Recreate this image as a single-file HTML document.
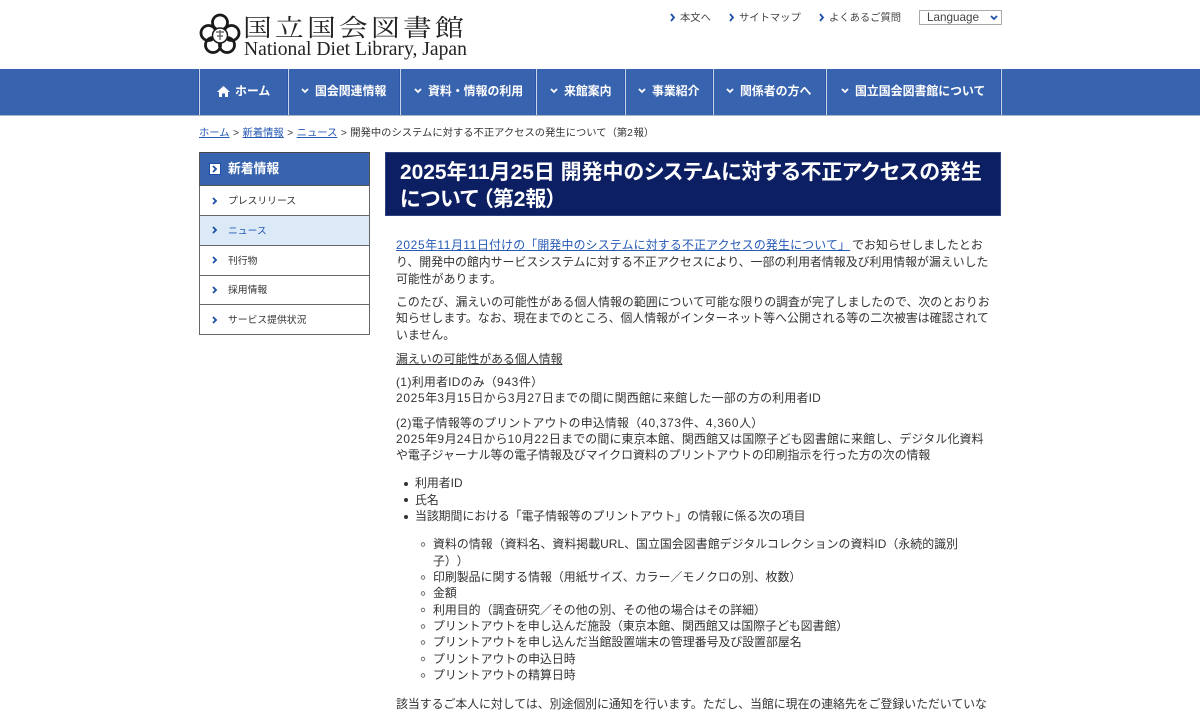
<!DOCTYPE html>
<html lang="ja"><head><meta charset="utf-8"><title>国立国会図書館</title>
<style>
html,body{margin:0;padding:0;background:#fff}
body{width:1200px;height:712px;overflow:hidden;position:relative;font-family:"Liberation Sans","Noto Sans CJK JP",sans-serif;color:#333;text-spacing-trim:space-all}
.a{position:absolute;white-space:nowrap}
.l{position:absolute;left:396px;white-space:nowrap;font-size:11.9px;line-height:16px;height:16px;color:#333}
i{font-style:normal;letter-spacing:.7px}
a{color:#2559b4;text-decoration:underline}
.nav{position:absolute;left:0;top:69px;width:1200px;height:46px;background:#3863ae;border-bottom:1px solid #a9b4c6}
.sep{position:absolute;top:69px;width:2px;height:46px;box-sizing:border-box;border-left:1px solid #2a55a8;border-right:1px solid #c9d4e8}
.ni{position:absolute;top:69px;height:46px;line-height:45px;font-size:11.9px;font-weight:bold;color:#fff;white-space:nowrap}
.side{position:absolute;left:199px;width:171px;box-sizing:border-box;border:1px solid #666;border-top:0;height:30px;line-height:29px;font-size:9.8px;color:#333;background:#fff}
.side span{position:absolute;left:28px;top:1px}
svg{position:absolute;overflow:visible}
.t{font-size:10.3px;line-height:14px;color:#444;top:12px}
</style></head><body>

<svg style="left:199px;top:14px" width="44" height="44" viewBox="0 0 44 44" fill="none" stroke="#1a1a1a" stroke-width="2.800"><circle cx="21" cy="8.500" r="7.500"/><circle cx="32.500" cy="19" r="7.500"/><circle cx="28" cy="31" r="7.500"/><circle cx="14" cy="31" r="7.500"/><circle cx="9.500" cy="19" r="7.500"/><circle cx="21" cy="21.500" r="7.500" fill="#fff" stroke-width="1.500"/><path d="M17 18h8M21 16v10M18 22h6" stroke="#555" stroke-width="1.200"/></svg>
<div class="a" style="left:243px;top:11px;font-family:'Noto Serif CJK SC','Liberation Serif',serif;font-size:24px;line-height:30px;letter-spacing:2.670px;color:#222;transform:scaleX(1.200);transform-origin:0 50%">国立国会図書館</div>
<div class="a" style="left:244px;top:40px;font-family:'Liberation Serif',serif;font-size:19.600px;line-height:20px;color:#222">National Diet Library, Japan</div>

<svg style="left:670px;top:13px" width="6" height="9" fill="none" stroke="#1c4fa8" stroke-width="1.800"><path d="M1 1l3 3.500l-3 3.500"/></svg>
<div class="a t" style="left:680px">本文へ</div>
<svg style="left:729px;top:13px" width="6" height="9" fill="none" stroke="#1c4fa8" stroke-width="1.800"><path d="M1 1l3 3.500l-3 3.500"/></svg>
<div class="a t" style="left:739px">サイトマップ</div>
<svg style="left:819px;top:13px" width="6" height="9" fill="none" stroke="#1c4fa8" stroke-width="1.800"><path d="M1 1l3 3.500l-3 3.500"/></svg>
<div class="a t" style="left:829px">よくあるご質問</div>
<div class="a" style="left:919px;top:10px;width:83px;height:15px;box-sizing:border-box;border:1px solid #aaa;background:#fff;font-size:11.700px;line-height:13px;padding-left:7px;color:#444">Language</div>
<svg style="left:990px;top:15px" width="9" height="6" fill="none" stroke="#1c4fa8" stroke-width="1.800"><path d="M1 1l3 3l3-3"/></svg>

<div class="nav"></div>
<div class="sep" style="left:198px"></div><div class="sep" style="left:287px"></div><div class="sep" style="left:399px"></div><div class="sep" style="left:535px"></div><div class="sep" style="left:624px"></div><div class="sep" style="left:712px"></div><div class="sep" style="left:825px"></div><div class="sep" style="left:1000px"></div>

<svg style="left:217px;top:86px" width="13" height="11" fill="#fff"><path d="M6.500 0L0 6h2v5h3V7.500h3V11h3V6h2z"/></svg>
<div class="ni" style="left:235px">ホーム</div>
<svg style="left:301px;top:88px" width="8" height="6" fill="none" stroke="#fff" stroke-width="1.800"><path d="M1 1l3 3l3-3"/></svg>
<div class="ni" style="left:315px">国会関連情報</div>
<svg style="left:414px;top:88px" width="8" height="6" fill="none" stroke="#fff" stroke-width="1.800"><path d="M1 1l3 3l3-3"/></svg>
<div class="ni" style="left:428px">資料・情報の利用</div>
<svg style="left:550px;top:88px" width="8" height="6" fill="none" stroke="#fff" stroke-width="1.800"><path d="M1 1l3 3l3-3"/></svg>
<div class="ni" style="left:564px">来館案内</div>
<svg style="left:638px;top:88px" width="8" height="6" fill="none" stroke="#fff" stroke-width="1.800"><path d="M1 1l3 3l3-3"/></svg>
<div class="ni" style="left:652px">事業紹介</div>
<svg style="left:726px;top:88px" width="8" height="6" fill="none" stroke="#fff" stroke-width="1.800"><path d="M1 1l3 3l3-3"/></svg>
<div class="ni" style="left:740px">関係者の方へ</div>
<svg style="left:841px;top:88px" width="8" height="6" fill="none" stroke="#fff" stroke-width="1.800"><path d="M1 1l3 3l3-3"/></svg>
<div class="ni" style="left:855px">国立国会図書館について</div>

<div class="a" style="left:199px;top:126px;font-size:10.300px;line-height:16px;color:#333;word-spacing:.6px"><a href="#">ホーム</a> &gt; <a href="#">新着情報</a> &gt; <a href="#">ニュース</a> &gt; 開発中のシステムに対する不正アクセスの発生について（第<i>2</i>報）</div>

<div class="a" style="left:199px;top:152px;width:171px;height:34px;box-sizing:border-box;border:1px solid #555;border-top-color:#444;background:#3863ae"></div>
<div class="a" style="left:209px;top:163px;width:12px;height:12px;background:#fff;border:1px solid #1c4fa8;box-sizing:border-box"></div>
<svg style="left:212px;top:165px" width="6" height="8" fill="none" stroke="#1c4fa8" stroke-width="1.800"><path d="M1 1l3 3l-3 3"/></svg>
<div class="a" style="left:228px;top:160px;font-size:12.800px;font-weight:bold;line-height:18px;color:#fff">新着情報</div>

<div class="side" style="top:186px"><span>プレスリリース</span></div>
<div class="side" style="top:216px;background:#dceaf7;color:#2559b4"><span>ニュース</span></div>
<div class="side" style="top:246px"><span>刊行物</span></div>
<div class="side" style="top:276px;height:29px;line-height:27px"><span>採用情報</span></div>
<div class="side" style="top:305px"><span>サービス提供状況</span></div>
<svg style="left:212px;top:197px" width="6" height="8" fill="none" stroke="#1c4fa8" stroke-width="1.800"><path d="M1 1l3 3l-3 3"/></svg>
<svg style="left:212px;top:226px" width="6" height="8" fill="none" stroke="#1c4fa8" stroke-width="1.800"><path d="M1 1l3 3l-3 3"/></svg>
<svg style="left:212px;top:256px" width="6" height="8" fill="none" stroke="#1c4fa8" stroke-width="1.800"><path d="M1 1l3 3l-3 3"/></svg>
<svg style="left:212px;top:286px" width="6" height="8" fill="none" stroke="#1c4fa8" stroke-width="1.800"><path d="M1 1l3 3l-3 3"/></svg>
<svg style="left:212px;top:316px" width="6" height="8" fill="none" stroke="#1c4fa8" stroke-width="1.800"><path d="M1 1l3 3l-3 3"/></svg>

<div class="a" style="left:385px;top:152px;width:616px;height:64px;background:#0d1f63;border:1px solid #33427f;box-sizing:border-box"></div>
<div class="a" style="left:400px;top:159px;font-size:20.950px;font-weight:bold;line-height:27px;color:#fff;font-feature-settings:'palt'">2025年11月25日 開発中のシステムに対する不正アクセスの発生<br>について<span style="margin-left:4px">（第2報）</span></div>

<div class="l" style="top:237px"><a href="#" style="letter-spacing:.19px;margin-right:2px"><i>2025</i>年<i>11</i>月<i>11</i>日付けの「開発中のシステムに対する不正アクセスの発生について」</a>でお知らせしましたとお</div>
<div class="l" style="top:254px">り、開発中の館内サービスシステムに対する不正アクセスにより、一部の利用者情報及び利用情報が漏えいした</div>
<div class="l" style="top:271px">可能性があります。</div>
<div class="l" style="top:294px">このたび、漏えいの可能性がある個人情報の範囲について可能な限りの調査が完了しましたので、次のとおりお</div>
<div class="l" style="top:310px">知らせします。なお、現在までのところ、個人情報がインターネット等へ公開される等の二次被害は確認されて</div>
<div class="l" style="top:327px">いません。</div>
<div class="l" style="top:351px;text-decoration:underline">漏えいの可能性がある個人情報</div>
<div class="l" style="top:374px;letter-spacing:.25px">(<i>1</i>)利用者IDのみ（<i>943</i>件）</div>
<div class="l" style="top:390px;letter-spacing:.23px"><i>2025</i>年<i>3</i>月<i>15</i>日から<i>3</i>月<i>27</i>日までの間に関西館に来館した一部の方の利用者ID</div>
<div class="l" style="top:415px;letter-spacing:.19px">(<i>2</i>)電子情報等のプリントアウトの申込情報（<i>40,373</i>件、<i>4,360</i>人）</div>
<div class="l" style="top:431px;letter-spacing:.19px"><i>2025</i>年<i>9</i>月<i>24</i>日から<i>10</i>月<i>22</i>日までの間に東京本館、関西館又は国際子ども図書館に来館し、デジタル化資料</div>
<div class="l" style="top:447px">や電子ジャーナル等の電子情報及びマイクロ資料のプリントアウトの印刷指示を行った方の次の情報</div>

<div class="a" style="left:404px;top:482px;width:4px;height:4px;border-radius:50%;background:#333"></div>
<div class="a" style="left:404px;top:498px;width:4px;height:4px;border-radius:50%;background:#333"></div>
<div class="a" style="left:404px;top:515px;width:4px;height:4px;border-radius:50%;background:#333"></div>
<div class="l" style="left:415px;top:475px">利用者ID</div>
<div class="l" style="left:415px;top:492px">氏名</div>
<div class="l" style="left:415px;top:508px;letter-spacing:-.06px">当該期間における「電子情報等のプリントアウト」の情報に係る次の項目</div>

<div class="l" style="left:433px;top:536px;letter-spacing:.05px">資料の情報（資料名、資料掲載URL、国立国会図書館デジタルコレクションの資料ID（永続的識別</div>
<div class="l" style="left:433px;top:553px">子））</div>
<div class="l" style="left:433px;top:569px">印刷製品に関する情報（用紙サイズ、カラー／モノクロの別、枚数）</div>
<div class="l" style="left:433px;top:585px">金額</div>
<div class="l" style="left:433px;top:602px">利用目的（調査研究／その他の別、その他の場合はその詳細）</div>
<div class="l" style="left:433px;top:618px;letter-spacing:-.03px">プリントアウトを申し込んだ施設（東京本館、関西館又は国際子ども図書館）</div>
<div class="l" style="left:433px;top:634px">プリントアウトを申し込んだ当館設置端末の管理番号及び設置部屋名</div>
<div class="l" style="left:433px;top:651px">プリントアウトの申込日時</div>
<div class="l" style="left:433px;top:667px">プリントアウトの精算日時</div>
<svg style="left:419px;top:0" width="8" height="700" fill="none" stroke="#555" stroke-width=".8"><circle cx="4" cy="544.500" r="1.800"/><circle cx="4" cy="577.500" r="1.800"/><circle cx="4" cy="593.500" r="1.800"/><circle cx="4" cy="610" r="1.800"/><circle cx="4" cy="626.500" r="1.800"/><circle cx="4" cy="642.500" r="1.800"/><circle cx="4" cy="659" r="1.800"/><circle cx="4" cy="675.500" r="1.800"/></svg>

<div class="l" style="top:696px;letter-spacing:-.03px">該当するご本人に対しては、別途個別に通知を行います。ただし、当館に現在の連絡先をご登録いただいていな</div>
</body></html>
